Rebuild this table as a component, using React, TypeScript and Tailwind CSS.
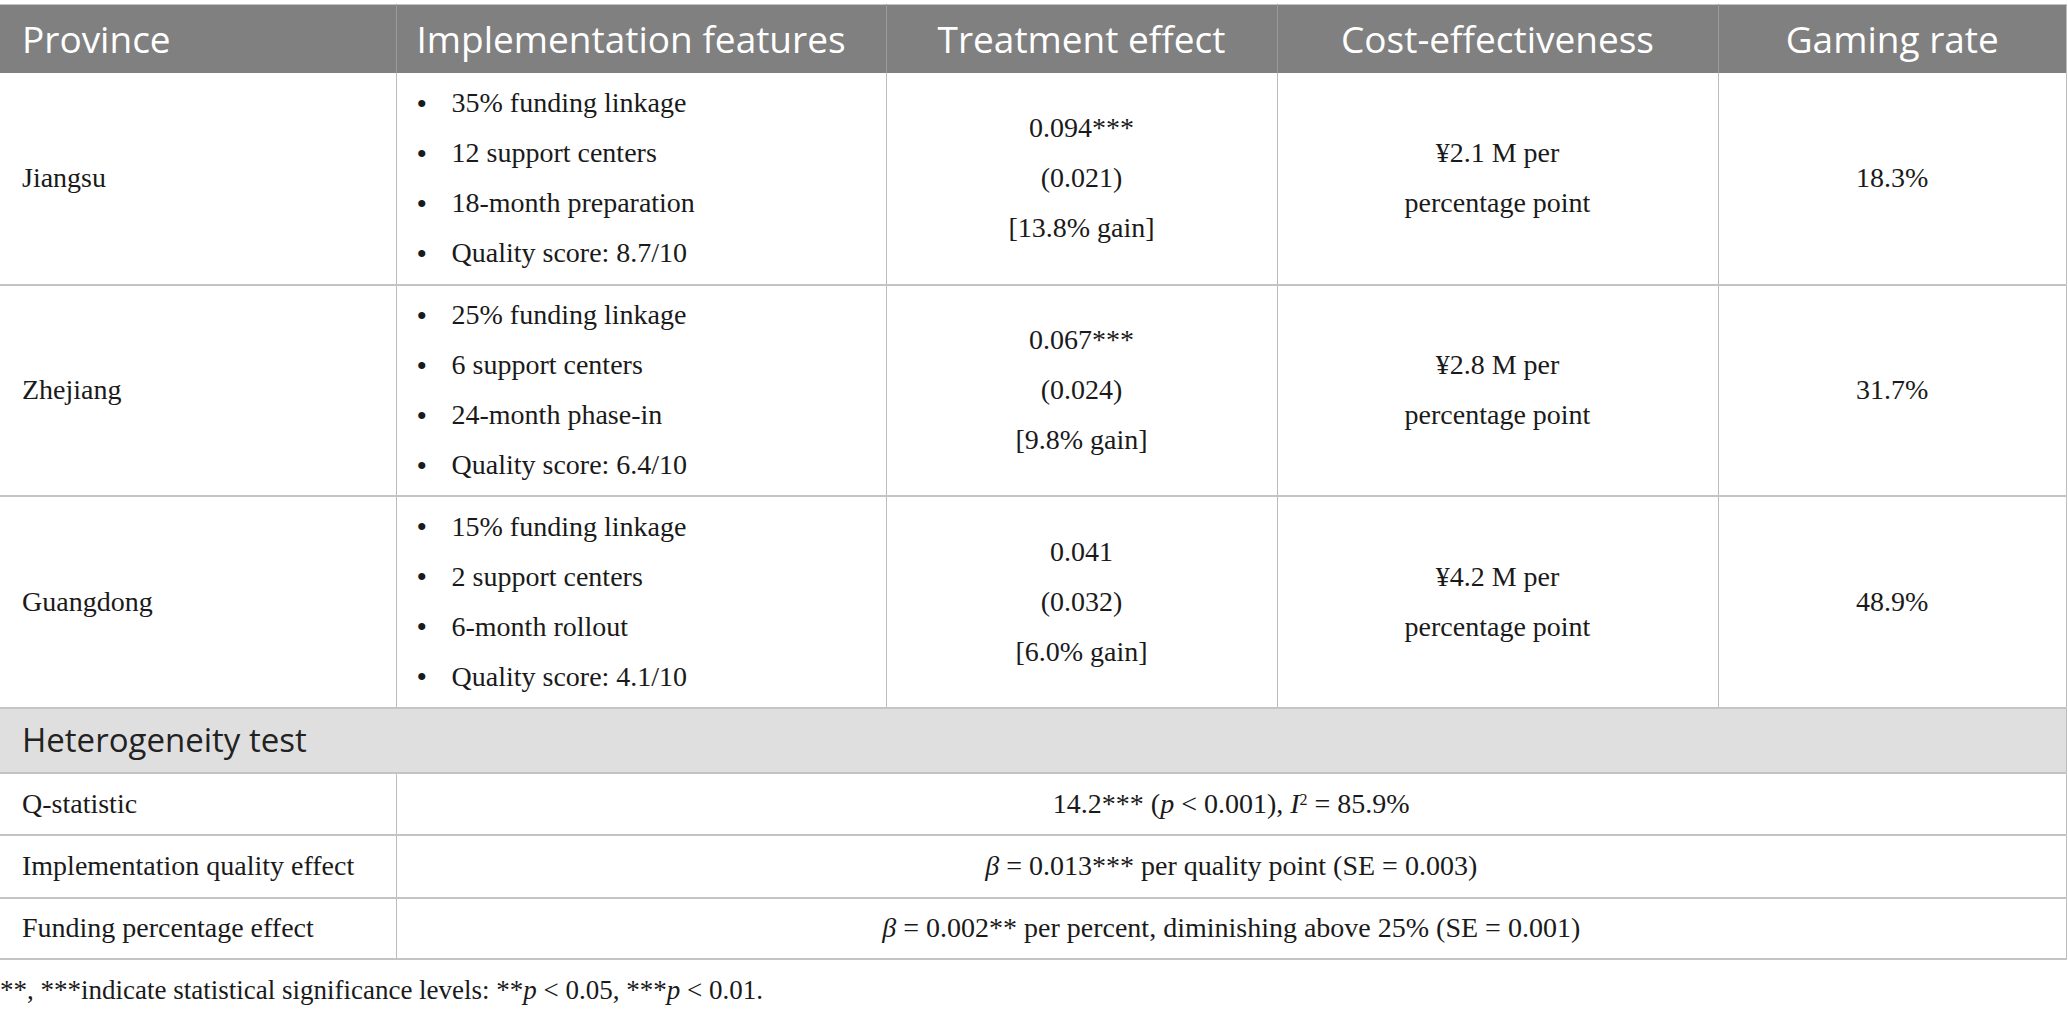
import React from "react";

const provinces = [
  {
    name: "Jiangsu",
    features: ["35% funding linkage", "12 support centers", "18-month preparation", "Quality score: 8.7/10"],
    effect: ["0.094***", "(0.021)", "[13.8% gain]"],
    cost: "¥2.1 M per",
    gaming: "18.3%",
    h: "h-[212px]",
  },
  {
    name: "Zhejiang",
    features: ["25% funding linkage", "6 support centers", "24-month phase-in", "Quality score: 6.4/10"],
    effect: ["0.067***", "(0.024)", "[9.8% gain]"],
    cost: "¥2.8 M per",
    gaming: "31.7%",
    h: "h-[211px]",
  },
  {
    name: "Guangdong",
    features: ["15% funding linkage", "2 support centers", "6-month rollout", "Quality score: 4.1/10"],
    effect: ["0.041", "(0.032)", "[6.0% gain]"],
    cost: "¥4.2 M per",
    gaming: "48.9%",
    h: "h-[212px]",
  },
];

const cellB = "border-b-2 border-b-[#c4c4c4] border-r border-r-[#bcbcbc]";

export default function App() {
  return (
    <div className="min-h-screen bg-white pt-[4px] text-[#1a1a1a] font-['Liberation_Serif',serif] text-[28px]">
      <table className="w-[2067px] table-fixed border-collapse border-t border-[#c4c4c4]">
        <colgroup>
          <col className="w-[396px]" />
          <col className="w-[490px]" />
          <col className="w-[391px]" />
          <col className="w-[441px]" />
          <col />
        </colgroup>
        <thead>
          <tr className="h-[68px] bg-[#7f807f] text-white font-['Open_Sans',sans-serif] text-[37px]">
            <th className="border-r border-r-[#9a9a9a] pl-[22px] text-left font-normal">Province</th>
            <th className="border-r border-r-[#9a9a9a] pl-[20px] text-left font-normal">Implementation features</th>
            <th className="border-r border-r-[#9a9a9a] text-center font-normal">Treatment effect</th>
            <th className="border-r border-r-[#9a9a9a] text-center font-normal">Cost-effectiveness</th>
            <th className="border-r border-r-[#bcbcbc] text-center font-normal">Gaming rate</th>
          </tr>
        </thead>
        <tbody>
          {provinces.map((p) => (
            <tr key={p.name} className={p.h}>
              <td className={`${cellB} pl-[22px] align-middle`}>{p.name}</td>
              <td className={`${cellB} align-middle`}>
                <ul>
                  {p.features.map((f) => (
                    <li key={f} className="flex h-[50px] items-center pl-[20px]">
                      <span className="w-[35px] text-[30px]">•</span>
                      <span>{f}</span>
                    </li>
                  ))}
                </ul>
              </td>
              <td className={`${cellB} text-center align-middle`}>
                {p.effect.map((e) => (
                  <div key={e} className="leading-[50px]">{e}</div>
                ))}
              </td>
              <td className={`${cellB} text-center align-middle`}>
                <div className="leading-[50px]">{p.cost}</div>
                <div className="leading-[50px]">percentage point</div>
              </td>
              <td className={`${cellB} text-center align-middle`}>{p.gaming}</td>
            </tr>
          ))}
          <tr className="h-[65px] bg-[#e0dfe0]">
            <td colSpan={5} className={`${cellB} pl-[22px] font-['Open_Sans',sans-serif] text-[33px] text-[#222]`}>
              Heterogeneity test
            </td>
          </tr>
          <tr className="h-[62px]">
            <td className={`${cellB} pl-[22px]`}>Q-statistic</td>
            <td colSpan={4} className={`${cellB} text-center`}>
              14.2*** (<i>p</i> &lt; 0.001), <i>I</i>
              <sup className="text-[16px]">2</sup> = 85.9%
            </td>
          </tr>
          <tr className="h-[63px]">
            <td className={`${cellB} pl-[22px]`}>Implementation quality effect</td>
            <td colSpan={4} className={`${cellB} text-center`}>
              <i>β</i> = 0.013*** per quality point (SE = 0.003)
            </td>
          </tr>
          <tr className="h-[61px]">
            <td className={`${cellB} pl-[22px]`}>Funding percentage effect</td>
            <td colSpan={4} className={`${cellB} text-center`}>
              <i>β</i> = 0.002** per percent, diminishing above 25% (SE = 0.001)
            </td>
          </tr>
        </tbody>
      </table>
      <p className="mt-[14px] text-[27px] leading-[32px]">
        **, ***indicate statistical significance levels: **<i>p</i> &lt; 0.05, ***<i>p</i> &lt; 0.01.
      </p>
    </div>
  );
}
